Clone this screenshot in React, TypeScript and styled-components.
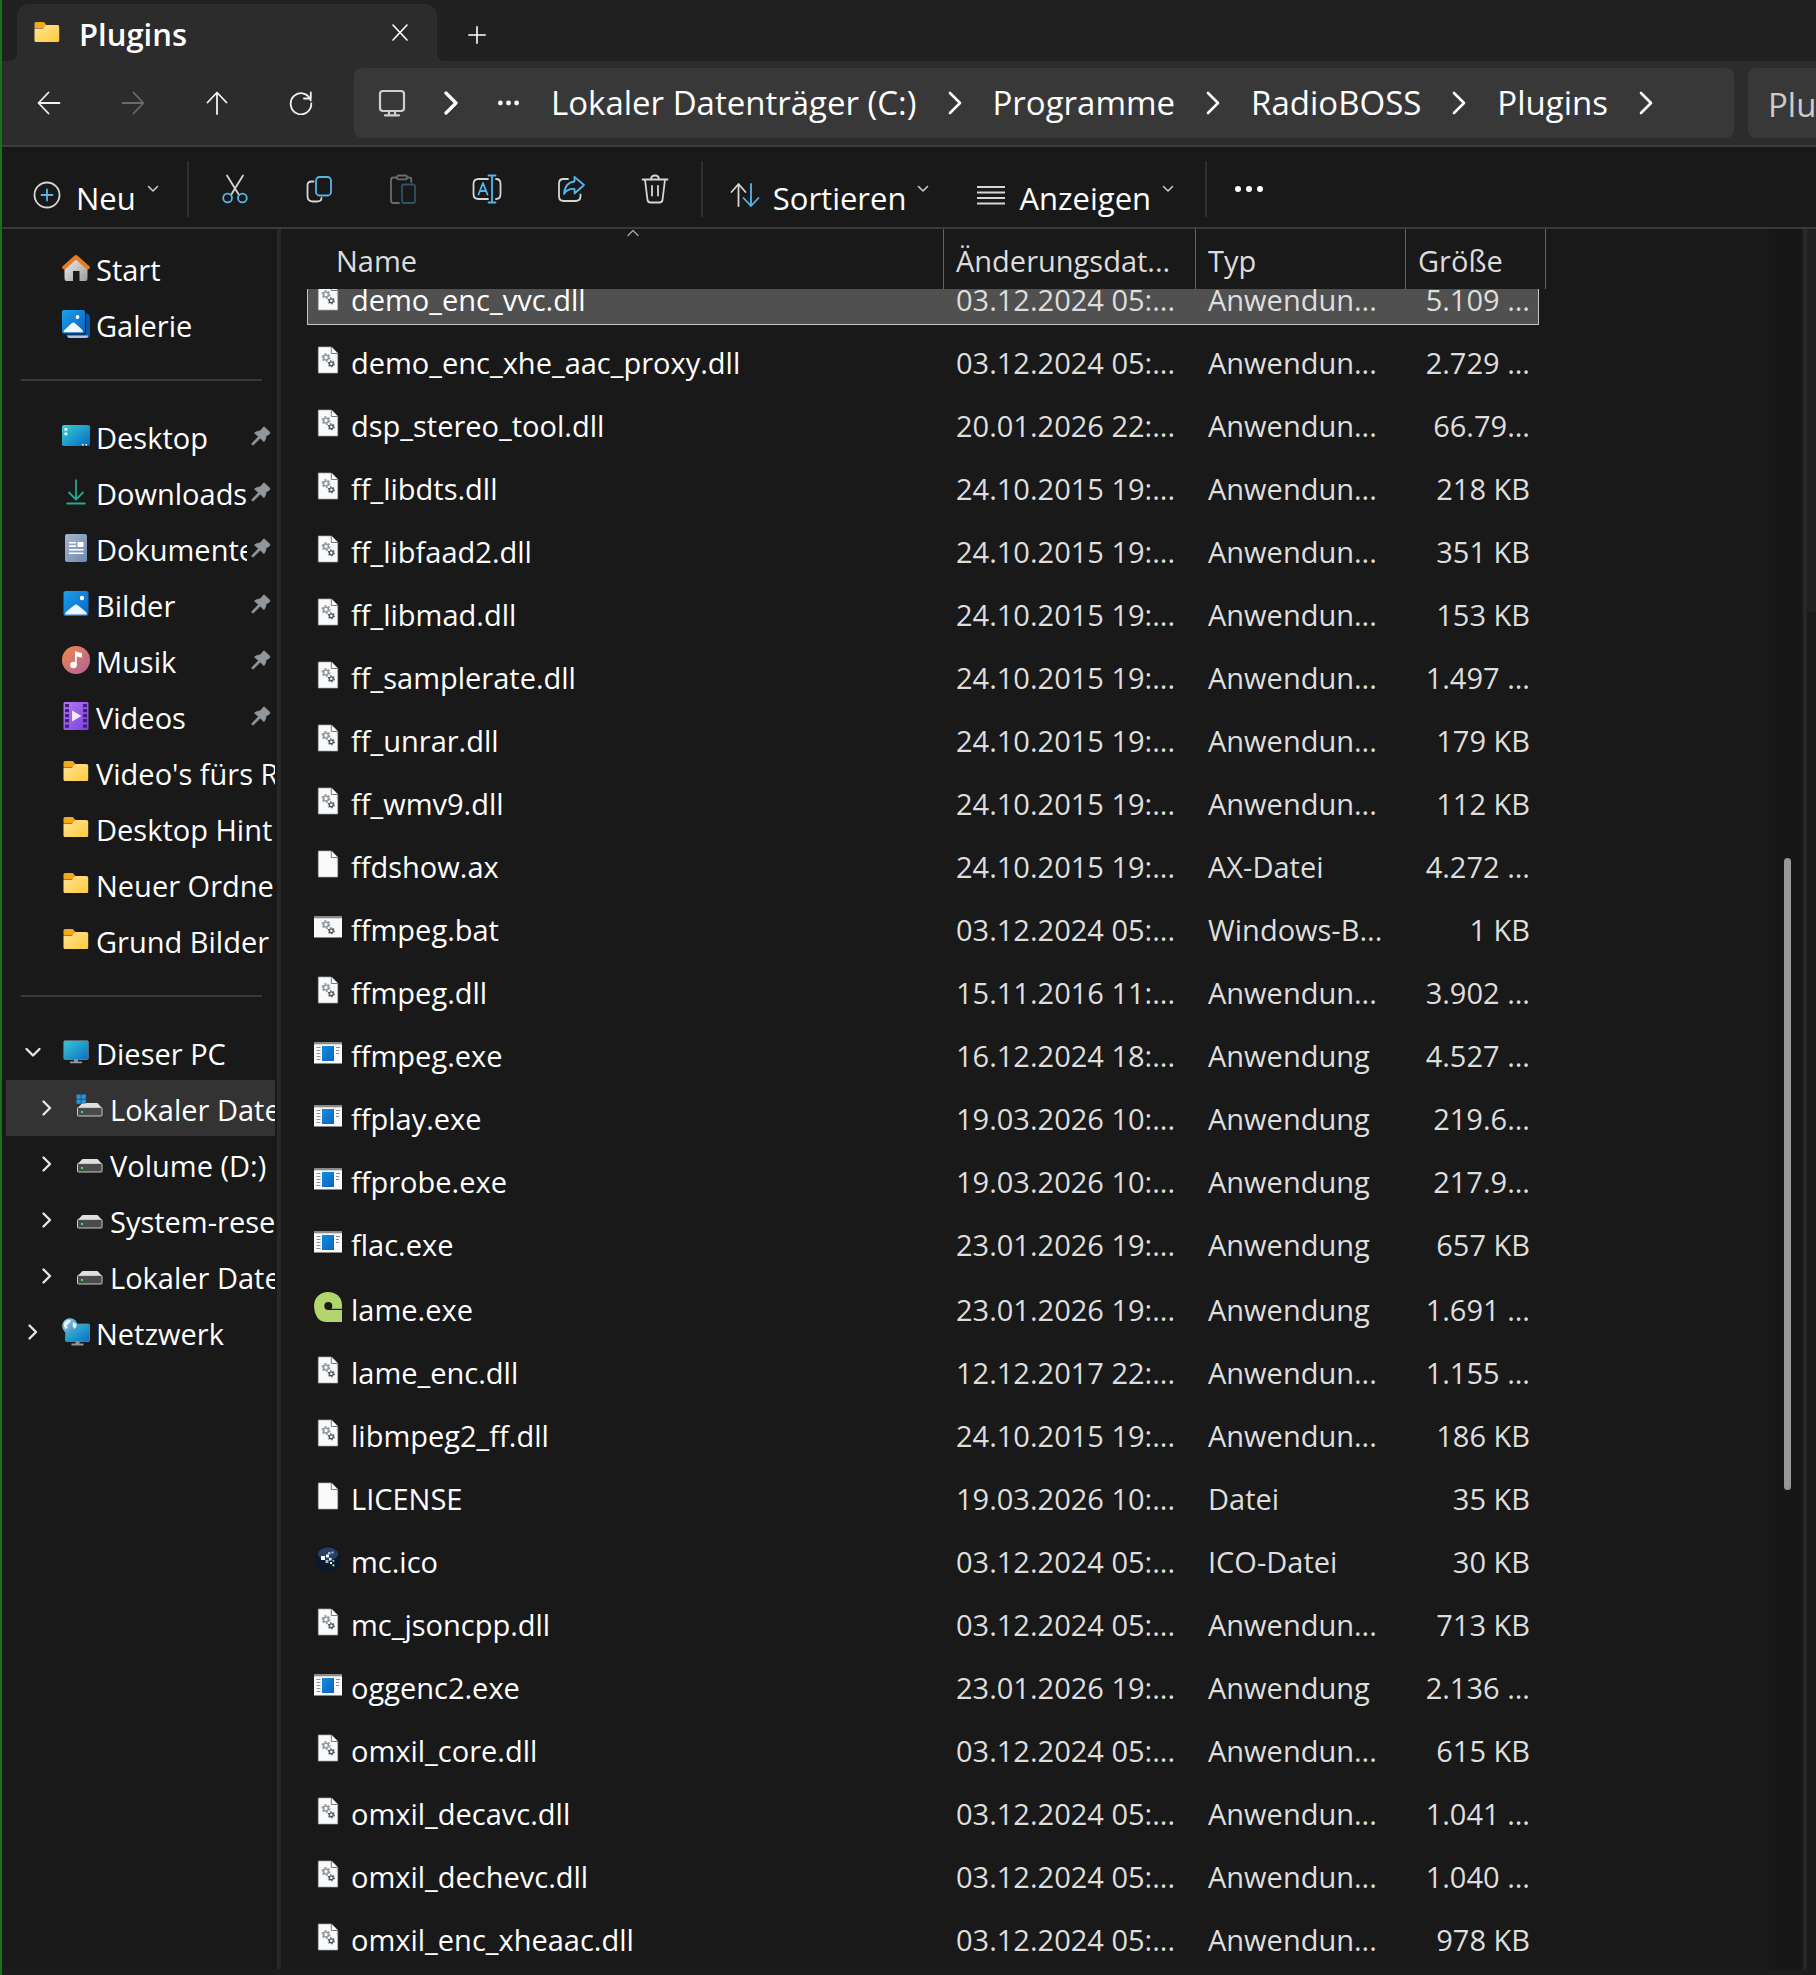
import React, { useLayoutEffect, useRef } from "react";
import styled, { createGlobalStyle, css } from "styled-components";

const GlobalStyle = createGlobalStyle`
  * { box-sizing: border-box; }
  body { margin: 0; background: #191919; }
  button, input, a { font: inherit; color: inherit; }
  svg { display: block; flex: none; }
`;

const Window = styled.div`
  height: 100vh;
  display: flex;
  flex-direction: column;
  overflow: hidden;
  border-left: 2px solid #14741a;
  background: #191919;
  color: #fff;
  font-family: "Open Sans", "Noto Sans", sans-serif;
  font-size: 29px;
`;

/* ---------- tab strip ---------- */

const TabStrip = styled.div`
  flex: none;
  display: flex;
  align-items: flex-end;
  height: 61px;
  padding-left: 15px;
  background: #202020;
`;

const Tab = styled.div`
  position: relative;
  display: flex;
  align-items: center;
  width: 420px;
  height: 57px;
  padding: 0 25px 0 16px;
  border-radius: 12px 12px 0 0;
  background: #2c2c2c;

  &::before,
  &::after {
    content: "";
    position: absolute;
    bottom: 0;
    width: 8px;
    height: 8px;
  }
  &::before {
    right: 100%;
    background: radial-gradient(circle at 0 0, transparent 8px, #2c2c2c 8px);
  }
  &::after {
    left: 100%;
    background: radial-gradient(circle at 100% 0, transparent 8px, #2c2c2c 8px);
  }
`;

const TabTitle = styled.span`
  flex: 1;
  margin-left: 18px;
  padding-top: 2px;
  font-size: 31px;
  font-weight: 600;
  line-height: 44px;
`;

const PlainButton = styled.button`
  display: flex;
  align-items: center;
  justify-content: center;
  margin: 0;
  padding: 0;
  border: 0;
  background: none;
  cursor: pointer;
`;

const TabAction = styled(PlainButton)`
  width: 24px;
  height: 24px;
`;

const NewTab = styled(PlainButton)`
  width: 80px;
  height: 53px;
`;

/* ---------- navigation bar ---------- */

const NavBar = styled.div`
  flex: none;
  display: flex;
  align-items: center;
  height: 86px;
  padding-left: 5px;
  background: #2c2c2c;
  border-bottom: 2px solid #3c3c3c;
`;

const NavButton = styled(PlainButton)`
  width: 84px;
  height: 70px;
  color: #f2f2f2;
  &:disabled {
    color: #6a6a6a;
  }
`;

const AddressBar = styled.nav`
  flex: 1;
  display: flex;
  align-items: center;
  height: 70px;
  margin-left: 11px;
  padding-left: 24px;
  border-radius: 8px;
  background: #383838;
`;

const CrumbLink = styled(PlainButton)`
  font-size: 33px;
  line-height: 44px;
`;

const CrumbArrow = styled.span<{ $lead?: number; $trail?: number }>`
  margin-left: ${(p) => p.$lead ?? 30}px;
  margin-right: ${(p) => p.$trail ?? 30}px;
`;

const CrumbMore = styled(PlainButton)`
  margin: 0 32px 0 39px;
`;

const SearchBox = styled.div`
  flex: none;
  width: 68px;
  height: 70px;
  margin-left: 14px;
  overflow: hidden;
`;

const SearchInput = styled.input`
  width: 280px;
  height: 70px;
  padding: 2px 20px 0;
  border: 0;
  border-radius: 8px;
  outline: 0;
  background: #383838;
  font-size: 33px;
  &::placeholder {
    color: #cbcbcb;
    opacity: 1;
  }
`;

/* ---------- command bar ---------- */

const CommandBar = styled.div`
  flex: none;
  display: flex;
  align-items: center;
  height: 82px;
  padding: 4px 0 0 31px;
  border-bottom: 2px solid #3a3a3a;
`;

const LabelCommand = styled(PlainButton)`
  align-items: center;
`;

const CommandIcon = styled.span`
  padding-top: 12px;
`;

const CommandLabel = styled.span<{ $gap: number }>`
  margin: 0 11px 0 ${(p) => p.$gap}px;
  padding-top: 18px;
  font-size: 31px;
  font-weight: 500;
  line-height: 40px;
`;

const IconCommand = styled(PlainButton)`
  width: 84px;
  height: 56px;
`;

const CommandDivider = styled.span<{ $before: number; $after: number }>`
  width: 2px;
  height: 56px;
  margin: 0 ${(p) => p.$after}px 0 ${(p) => p.$before}px;
  background: #2e2e2e;
`;

const CommandGap = styled.span`
  width: 47px;
`;

/* ---------- body ---------- */

const Body = styled.div`
  flex: 1;
  min-height: 0;
  display: flex;
`;

const Footer = styled.div`
  flex: none;
  height: 6px;
  background: #1c1c1c;
`;

const Sidebar = styled.nav`
  flex: none;
  width: 273px;
  padding: 11px 0 0 4px;
  overflow: hidden;
`;

const PaneEdge = styled.div`
  flex: none;
  width: 4px;
  margin-left: 2px;
  background: #282828;
`;

const SideItem = styled.a<{ $selected?: boolean; $nested?: boolean; $tree?: boolean }>`
  display: flex;
  align-items: center;
  height: 56px;
  padding-left: ${(p) => (p.$nested ? 31 : p.$tree ? 17 : 56)}px;
  background: ${(p) => (p.$selected ? "#333" : "transparent")};
  text-decoration: none;
`;

const Twisty = styled.span`
  width: 39px;
  padding-left: 1px;
`;

const SideLabel = styled.span`
  flex: 1;
  min-width: 0;
  margin-left: 6px;
  padding-top: 3px;
  overflow: hidden;
  white-space: nowrap;
  line-height: 44px;
`;

const PinSlot = styled.span`
  padding: 0 4px;
`;

const SideRule = styled.hr`
  height: 2px;
  margin: 27px 13px 27px 15px;
  border: 0;
  background: #3a3a3a;
`;

const FilePane = styled.main`
  flex: 1;
  min-width: 0;
  padding-left: 26px;
  overflow: auto;
  scrollbar-width: none;
`;

const FileTable = styled.table`
  table-layout: fixed;
  width: 1239px;
  margin-bottom: 63px;
  border-collapse: separate;
  border-spacing: 0;
`;

const HeadCell = styled.th<{ $line?: boolean }>`
  position: sticky;
  top: 0;
  z-index: 1;
  height: 60px;
  padding: 4px 0 0 12px;
  background: #191919;
  border-right: ${(p) => (p.$line ? "1px solid #636363" : "0")};
  color: #dcdcdc;
  font-weight: 400;
  line-height: 40px;
  text-align: left;
  white-space: nowrap;
`;

const NameHead = styled.div`
  position: relative;
  padding-left: 17px;
`;

const SortMark = styled.span`
  position: absolute;
  top: -12px;
  left: calc(50% - 4px);
`;

const FileRow = styled.tr<{ $tall?: boolean; $selected?: boolean }>`
  height: ${(p) => (p.$tall ? 65 : 63)}px;
  ${(p) =>
    p.$selected &&
    css`
      td:not(:last-child) {
        background: #505050;
        box-shadow: inset 0 -1px #c4c4c4;
      }
      td:first-child {
        box-shadow: inset 1px -1px #c4c4c4;
      }
      td:nth-child(4) {
        box-shadow: inset -1px -1px #c4c4c4;
      }
    `}
`;

const Cell = styled.td<{ $right?: boolean }>`
  padding: 0 ${(p) => (p.$right ? 9 : 0)}px 0 12px;
  vertical-align: bottom;
  color: #dedede;
  line-height: 50px;
  text-align: ${(p) => (p.$right ? "right" : "left")};
  white-space: nowrap;
`;

const NameCell = styled(Cell)`
  padding-left: 7px;
  color: #fff;
`;

const FileName = styled.div`
  display: flex;
  align-items: center;
  gap: 9px;
`;

const FileIconBox = styled.span`
  margin-bottom: 7px;
`;

const ScrollTrack = styled.div`
  flex: none;
  display: flex;
  flex-direction: column;
  align-items: center;
  width: 32px;
  padding-left: 5px;
  background: #171717;
`;

const TrackSpace = styled.div<{ $share: number }>`
  flex: ${(p) => p.$share};
`;

const ScrollThumb = styled.div<{ $share: number }>`
  flex: ${(p) => p.$share};
  width: 7px;
  border-radius: 4px;
  background: #989898;
`;

const PreviewPane = styled.aside`
  flex: none;
  display: flex;
  flex-direction: column;
  width: 9px;
  &::before {
    content: "";
    height: 22%;
    background: #202020;
  }
`;

/* ---------- line icons ---------- */

const line = {
  fill: "none",
  stroke: "currentColor",
  strokeWidth: 1.8,
  strokeLinecap: "round" as const,
  strokeLinejoin: "round" as const,
};
const BLUE = "#56b6ea";
const PALE = "#d6d6d6";

const Chevron = ({ w, h, d, sw = 2, color = "#fff" }: { w: number; h: number; d: string; sw?: number; color?: string }) => (
  <svg width={w} height={h} viewBox={`0 0 ${w} ${h}`} aria-hidden="true">
    <path {...line} stroke={color} strokeWidth={sw} d={d} />
  </svg>
);
const CrumbChevron = ({ sw = 2.6 }: { sw?: number }) => <Chevron w={16} h={24} sw={sw} d="M3 2 L13 12 L3 22" />;
const DropChevron = () => (
  <Chevron w={12} h={8} sw={1.6} color="#c9c9c9" d="M1.5 1.5 L6 6 L10.5 1.5" />
);
const TreeChevron = ({ open }: { open?: boolean }) => (
  <Chevron w={18} h={18} sw={2.4} color="#e4e4e4" d={open ? "M2.5 6 L9 12.5 L15.5 6" : "M5.5 2.5 L12 9 L5.5 15.5"} />
);

const Dots = ({ w, r }: { w: number; r: number }) => (
  <svg width={w} height={8} viewBox={`0 0 ${w} 8`} aria-hidden="true">
    {[r, w / 2, w - r].map((x) => (
      <circle key={x} cx={x} cy="4" r={r} fill="#fff" />
    ))}
  </svg>
);

const BackIcon = () => (
  <svg width="24" height="24" viewBox="0 0 24 24">
    <path {...line} d="M22.5 12 H2 M11.5 1.5 L1.5 12 L11.5 22.5" />
  </svg>
);
const ForwardIcon = () => (
  <svg width="24" height="24" viewBox="0 0 24 24">
    <path {...line} d="M1.5 12 H22 M12.5 1.5 L22.5 12 L12.5 22.5" />
  </svg>
);
const UpIcon = () => (
  <svg width="24" height="24" viewBox="0 0 24 24">
    <path {...line} d="M12 23 V2 M2.5 11.5 L12 1.5 L21.5 11.5" />
  </svg>
);
const RefreshIcon = () => (
  <svg width="24" height="24" viewBox="0 0 24 24">
    <path {...line} d="M21.8 9.5 A10.3 10.6 0 1 0 22.3 12.5 M21.8 1.5 V7.5 H15" />
  </svg>
);
const CloseIcon = () => (
  <svg width="18" height="18" viewBox="0 0 18 18">
    <path {...line} strokeWidth="1.6" d="M2 1 L16 16 M16 1 L2 16" />
  </svg>
);
const PlusIcon = () => (
  <svg width="18" height="18" viewBox="0 0 18 18">
    <path {...line} strokeWidth="1.6" d="M9 .8 V17.2 M.8 9 H17.2" />
  </svg>
);
const MonitorIcon = () => (
  <svg width="28" height="28" viewBox="0 0 28 28">
    <path {...line} stroke="#cfcfcf" strokeWidth="2.2" d="M5 2 H23 Q26 2 26 5 V19 Q26 22 23 22 H5 Q2 22 2 19 V5 Q2 2 5 2 Z M11 22 V26 M17 22 V26 M7 26.4 H21" />
  </svg>
);

const NewIcon = () => (
  <svg width="28" height="28" viewBox="0 0 28 28">
    <circle {...line} stroke={PALE} cx="14" cy="14" r="12.5" />
    <path {...line} stroke={BLUE} d="M14 8.5 V19.5 M8.5 14 H19.5" />
  </svg>
);
const CutIcon = () => (
  <svg width="30" height="30" viewBox="0 0 30 30">
    <path {...line} stroke={PALE} d="M7 1.5 L19 21 M23 1.5 L11 21" />
    <circle {...line} stroke={BLUE} cx="7.6" cy="24" r="4.4" />
    <circle {...line} stroke={BLUE} cx="22.4" cy="24" r="4.4" />
  </svg>
);
const CopyIcon = () => (
  <svg width="30" height="30" viewBox="0 0 30 30">
    <path {...line} stroke={PALE} d="M9.5 7.5 H7.5 Q3.5 7.5 3.5 11.5 V22 Q3.5 27.5 9 27.5 H13 Q17.5 27.5 17.5 24" />
    <rect {...line} stroke={BLUE} x="12" y="3" width="15" height="18.5" rx="3.5" />
  </svg>
);
const PasteIcon = () => (
  <svg width="30" height="30" viewBox="0 0 30 30">
    <path {...line} stroke="#6b6b6b" d="M9 3.5 H5.5 Q3 3.5 3 6 V26.5 Q3 29 5.5 29 H11 M19 3.5 H21 Q23.3 3.5 23.3 6 V8 M10.5 1.5 H17.5 Q19 1.5 19 3.4 Q19 5.4 17.5 5.4 H10.5 Q9 5.4 9 3.4 Q9 1.5 10.5 1.5 Z" />
    <rect {...line} stroke="#2f5266" x="14" y="10.5" width="13" height="18.5" rx="2" />
  </svg>
);
const RenameIcon = () => (
  <svg width="30" height="30" viewBox="0 0 30 30">
    <path {...line} stroke={PALE} d="M16 5 H6.5 Q1.5 5 1.5 10 V20 Q1.5 25 6.5 25 H16 M24 5 Q28.5 5 28.5 10 V20 Q28.5 25 24 25" />
    <path {...line} stroke={BLUE} d="M6.5 20.5 L11 9 L15.5 20.5 M8 17 H14 M20 1.5 V28.5 M16.5 1.5 H23.5 M16.5 28.5 H23.5" />
  </svg>
);
const ShareIcon = () => (
  <svg width="30" height="30" viewBox="0 0 30 30">
    <path {...line} stroke={PALE} d="M12 5 H7.500 Q3 5 3 9.500 V22 Q3 27 7.500 27 H19.500 Q24.500 27 24.500 22 V20.500" />
    <path {...line} stroke={BLUE} d="M18.500 3 L28 11 L18.500 19.500 V15 Q11.500 14.500 8 20 Q9 8.500 18.500 7.500 Z" />
  </svg>
);
const TrashIcon = () => (
  <svg width="30" height="30" viewBox="0 0 30 30">
    <path {...line} stroke={PALE} d="M2.500 5.500 H27.500 M11 5.500 Q11 1.500 15 1.500 Q19 1.500 19 5.500 M5 5.500 L7.500 26 Q8 28.500 10.500 28.500 H19.500 Q22 28.500 22.500 26 L25 5.500 M12 12 V21.500 M18 12 V21.500" />
  </svg>
);
const SortIcon = () => (
  <svg width="30" height="26" viewBox="0 0 30 26">
    <path {...line} stroke={PALE} d="M8.500 24 V2.500 M1.500 10 L8.500 2 L15.500 10" />
    <path {...line} stroke={BLUE} d="M21 2 V24 M13.500 16 L21 24 L28.500 16" />
  </svg>
);
const ViewIcon = () => (
  <svg width="30" height="22" viewBox="0 0 30 22">
    <path {...line} strokeLinecap="butt" stroke={PALE} d="M1 3 H29 M1 8.500 H29 M1 14 H29 M1 19.500 H29" />
  </svg>
);

/* ---------- coloured icons ---------- */

const Grad = ({ id, from, to }: { id: string; from: string; to: string }) => (
  <linearGradient id={id} x1="0" y1="0" x2="1" y2="1">
    <stop offset="0" stopColor={from} />
    <stop offset="1" stopColor={to} />
  </linearGradient>
);

const Icon28 = ({ children }: { children: React.ReactNode }) => (
  <svg width="28" height="28" viewBox="0 0 28 28" aria-hidden="true">
    {children}
  </svg>
);

const FolderIcon = () => (
  <Icon28>
    <defs><Grad id="folder" from="#ffe596" to="#ffca3c" /></defs>
    <path fill="#f3a71b" d="M1.500 4.500 Q1.500 3 3 3 H10 Q11 3 11.800 4 L13 5.500 V9 H1.500 Z" />
    <path fill="url(#folder)" d="M1.500 9.500 H9.500 Q10.500 9.500 11.300 8.500 L13 6 H24.500 Q26.200 6 26.200 7.500 V21.500 Q26.200 23 24.700 23 H3 Q1.500 23 1.500 21.500 Z" />
  </Icon28>
);
const HomeIcon = () => (
  <Icon28>
    <defs><Grad id="wall" from="#f0f0f0" to="#9d9d9d" /></defs>
    <path fill="url(#wall)" d="M2.500 13 L14 3 L25.500 13 V24.500 Q25.500 27 23.500 27 H17.500 V17 H11 V27 H4.500 Q2.500 27 2.500 24.500 Z" />
    <path fill="none" stroke="#e87b22" strokeWidth="4" strokeLinecap="round" strokeLinejoin="round" d="M2.200 13.500 L14 3 L25.800 13.500" />
  </Icon28>
);
const GalleryIcon = () => (
  <Icon28>
    <defs><Grad id="sky" from="#1ba0e9" to="#0b62c4" /></defs>
    <path fill="#0a57a8" d="M24 3 Q28 4 28 8 V25 Q28 28 25 28 H8 Q5 28 4 24.500 H22 Q24 24.500 24 22 Z" />
    <path fill="#a9c6e6" d="M5 25.500 H26.500 Q26 28 24 28 H8 Q5.500 28 5 25.500 Z" />
    <rect width="23" height="23.500" rx="2" fill="url(#sky)" />
    <circle cx="15.500" cy="7" r="1.900" fill="#fff" />
    <path fill="#eef7ff" d="M1.500 22.300 Q1.500 20.800 3 19.500 L10 13 Q11.300 12 12.700 13 L19.500 19 Q21.300 21 21 22.300 Z" />
  </Icon28>
);
const PicturesIcon = () => (
  <Icon28>
    <defs><Grad id="sky2" from="#1ba0e9" to="#0b62c4" /></defs>
    <rect x="1.500" y="1" width="25" height="25" rx="2.500" fill="url(#sky2)" />
    <circle cx="20" cy="8" r="2.200" fill="#fff" />
    <path fill="#eef7ff" d="M3 24.500 Q3 23 4.500 21.500 L12.500 15 Q14 13.800 15.500 15 L23.500 21.500 Q25 23 25 24.500 Z" />
  </Icon28>
);
const DesktopIcon = () => (
  <Icon28>
    <defs><Grad id="desk" from="#34cfd6" to="#0868c0" /></defs>
    <rect y="3" width="28" height="21" rx="1.800" fill="url(#desk)" />
    <path fill="#e9fbff" d="M2.500 6 h2.800 v2.800 h-2.800z M2.500 10.500 h2.800 v2.800 h-2.800z M20 22 h1.500 v1.500 h-1.500z M23.500 22 h1.500 v1.500 h-1.500z" />
  </Icon28>
);
const DownloadIcon = () => (
  <Icon28>
    <path fill="none" stroke="#2ba58b" strokeWidth="1.800" strokeLinejoin="round" d="M14 1.500 V21 M6.500 14 L14 21.500 L21.500 14 M4.500 25.500 H23.500" />
  </Icon28>
);
const DocumentsIcon = () => (
  <Icon28>
    <defs><Grad id="docs" from="#a5b7cf" to="#6f88ab" /></defs>
    <rect x="3" width="22" height="28" rx="2" fill="url(#docs)" />
    <path fill="#fff" d="M7 8 h7 v1.600 h-7z M7 11.300 h7 v1.600 h-7z M15.500 8 h6 v5 h-6z M7 15 h14.500 v1.600 h-14.500z M7 18.500 h14.500 v1.600 h-14.500z" />
  </Icon28>
);
const MusicIcon = () => (
  <Icon28>
    <defs><Grad id="music" from="#f08a4b" to="#b0609f" /></defs>
    <circle cx="14" cy="14" r="14" fill="url(#music)" />
    <circle cx="11.500" cy="19" r="3.300" fill="#fff" />
    <path fill="#fff" d="M13 5.500 Q13.500 5 14.300 5.500 Q17 6.500 20 7 V11.500 Q17 11.500 14.800 10.300 V19 H13 Z" />
  </Icon28>
);
const VideoIcon = () => (
  <Icon28>
    <defs><Grad id="video" from="#b27af0" to="#7d3fe0" /></defs>
    <rect x="1.500" width="25" height="28" rx="1.500" fill="url(#video)" />
    {[2, 7, 12, 17, 22.5].map((y) => (
      <path key={y} fill="#402273" d={`M3 ${y} h4 v3.3 h-4z M21 ${y} h4 v3.3 h-4z`} />
    ))}
    <path fill="#f2eaff" d="M10 8.500 L19.500 14 L10 19.500 Z" />
  </Icon28>
);
const ComputerIcon = () => (
  <Icon28>
    <defs><Grad id="pc" from="#35cbd9" to="#0b6cc4" /></defs>
    <rect x="1.800" y="2.800" width="24.500" height="18.700" rx="1" fill="url(#pc)" stroke="#7b8790" strokeWidth=".8" />
    <path fill="#8d969c" d="M12 21.500 h4 v2 h4 v1.800 h-12 v-1.800 h4z" />
  </Icon28>
);
const NetworkIcon = () => (
  <Icon28>
    <defs>
      <Grad id="net" from="#35cbd9" to="#0b6cc4" />
      <Grad id="globe" from="#9bd3ec" to="#2c86bd" />
    </defs>
    <rect x="3.500" y="6" width="24" height="17.500" rx="1" fill="url(#net)" stroke="#7b8790" strokeWidth=".8" />
    <path fill="#8d969c" d="M13.500 23.500 h4 v2 h4 v2 h-12 v-2 h4z" />
    <circle cx="8" cy="8" r="7.800" fill="url(#globe)" />
    <path fill="#e4f4fb" d="M2 5 Q5 1 9 2 L7.500 5 L4.500 7.500 L6 10 L3.500 11 Q1 8 2 5 Z M11 4 L14.500 6 Q15 9 12.500 11 L10.500 8 Z" />
  </Icon28>
);
const DriveIcon = ({ system }: { system?: boolean }) => (
  <Icon28>
    <path fill="#dfdfdf" d="M6.500 9 H21.500 L26 14 H1.500 Z" />
    <rect x="1.500" y="13.500" width="24.500" height="8.500" rx=".8" fill="#4b4b4b" stroke="#c9c9c9" strokeWidth="1" />
    <rect x="5" y="17" width="2" height="2" fill="#4de04d" />
    {system && <path fill="#2a96e0" d="M.5 .5 h4.300 v4.300 h-4.300z M5.500 .5 h4.300 v4.300 h-4.300z M.5 5.500 h4.300 v4.300 h-4.300z M5.500 5.500 h4.300 v4.300 h-4.300z" />}
  </Icon28>
);
const PinIcon = () => (
  <svg width="20" height="20" viewBox="0 0 20 20" aria-hidden="true">
    <path fill="#8f989f" stroke="#8f989f" strokeWidth=".8" strokeLinejoin="round" d="M12 1.500 Q13 .5 14 1.500 L18.500 6 Q19.500 7.500 18 8.300 L15 10 Q14.700 14 13 15.800 L9.300 12.100 L2.800 18.500 Q1.500 19.200 1 18.700 Q.6 18 1.400 17 L7.500 10.800 L3.500 7 Q6 5 9.600 4.800 Z" />
  </svg>
);

const Gear = ({ x, y, r, color }: { x: number; y: number; r: number; color: string }) => (
  <g fill="none" stroke={color}>
    <circle cx={x} cy={y} r={r * 0.62} strokeWidth={r * 0.42} />
    <circle cx={x} cy={y} r={r * 0.95} strokeWidth={r * 0.35} strokeDasharray={`${r * 0.46} ${r * 0.535}`} />
  </g>
);
const Gears = () => (
  <>
    <Gear x={12} y={11.5} r={4} color="#8d99a2" />
    <Gear x={17.3} y={17.8} r={3.2} color="#49535b" />
  </>
);
const Sheet = () => (
  <>
    <path fill="#fafafa" stroke="#a8a8a8" strokeWidth=".7" d="M4.300 1 H17.500 L23.700 7.300 V27 H4.300 Z" />
    <path fill="#fff" stroke="#777" strokeWidth="1" d="M17.300 1 V7.500 H23.700" />
  </>
);
const Frame = () => (
  <>
    <rect x="0" y="3.500" width="28" height="21" fill="#fafafa" />
    <path fill="#8b8b8b" d="M0 3.500 h28 v1.800 h-28z" />
  </>
);

type Kind = "dll" | "file" | "bat" | "exe" | "lame" | "ico";

const FileIcon = ({ kind }: { kind: Kind }) => {
  switch (kind) {
    case "dll":
      return <Icon28><Sheet /><Gears /></Icon28>;
    case "file":
      return <Icon28><Sheet /></Icon28>;
    case "bat":
      return <Icon28><Frame /><Gears /></Icon28>;
    case "exe":
      return (
        <Icon28>
          <defs><Grad id="app" from="#118fe0" to="#0d62bd" /></defs>
          <Frame />
          <rect x="8" y="7" width="12" height="15" fill="url(#app)" />
          <path stroke="#8a8f94" strokeWidth="1" d="M2.500 8.500 h4 M2.500 11.500 h4 M2.500 14.500 h4 M2.500 17.500 h4 M2.500 20.500 h4 M22 8.500 h4 M22 11.500 h3 M22 14.500 h3" />
        </Icon28>
      );
    case "lame":
      return (
        <svg width="28" height="30" viewBox="0 0 28 30" aria-hidden="true">
          <path fill="#b3d56d" d="M0 13 Q.5 7 4.500 3.500 Q8 0 14 0 Q20 0 24 3.500 Q28 7.500 28 13 V30 H12 Q5.500 29.500 3 25 Q0 20 0 13 Z" />
          <circle cx="14.300" cy="14" r="4" fill="#191919" />
          <path stroke="#191919" strokeWidth="1.200" d="M14 17.400 H28" />
        </svg>
      );
    case "ico":
      return (
        <Icon28>
          <circle cx="14" cy="14" r="13.500" fill="#0d1828" />
          <ellipse cx="14" cy="9" rx="10" ry="6.500" fill="#2b3f63" />
          <path fill="#f2fbff" d="M7 11 h4 v4 h-4z M12 9.500 h3 v3 h-3z M15 13 h2.500 v2.500 h-2.500z" />
          <path fill="#8fc0e6" d="M11.500 15 h3 v3 h-3z M14 7 h2.500 v2.500 h-2.500z M17.500 6.500 h2 v2 h-2z M18.500 15 h1.800 v1.800 h-1.800z" />
          <path fill="#e7f3b0" d="M16 17 h2 v2 h-2z M18.500 19.500 h1.800 v1.800 h-1.800z" />
        </Icon28>
      );
  }
};

/* ---------- data ---------- */

const DLL = "Anwendun...";
const EXE = "Anwendung";

const files: [string, string, string, string, Kind][] = [
  ["demo_enc_vvc.dll", "03.12.2024 05:...", DLL, "5.109 ...", "dll"],
  ["demo_enc_xhe_aac_proxy.dll", "03.12.2024 05:...", DLL, "2.729 ...", "dll"],
  ["dsp_stereo_tool.dll", "20.01.2026 22:...", DLL, "66.79...", "dll"],
  ["ff_libdts.dll", "24.10.2015 19:...", DLL, "218 KB", "dll"],
  ["ff_libfaad2.dll", "24.10.2015 19:...", DLL, "351 KB", "dll"],
  ["ff_libmad.dll", "24.10.2015 19:...", DLL, "153 KB", "dll"],
  ["ff_samplerate.dll", "24.10.2015 19:...", DLL, "1.497 ...", "dll"],
  ["ff_unrar.dll", "24.10.2015 19:...", DLL, "179 KB", "dll"],
  ["ff_wmv9.dll", "24.10.2015 19:...", DLL, "112 KB", "dll"],
  ["ffdshow.ax", "24.10.2015 19:...", "AX-Datei", "4.272 ...", "file"],
  ["ffmpeg.bat", "03.12.2024 05:...", "Windows-B...", "1 KB", "bat"],
  ["ffmpeg.dll", "15.11.2016 11:...", DLL, "3.902 ...", "dll"],
  ["ffmpeg.exe", "16.12.2024 18:...", EXE, "4.527 ...", "exe"],
  ["ffplay.exe", "19.03.2026 10:...", EXE, "219.6...", "exe"],
  ["ffprobe.exe", "19.03.2026 10:...", EXE, "217.9...", "exe"],
  ["flac.exe", "23.01.2026 19:...", EXE, "657 KB", "exe"],
  ["lame.exe", "23.01.2026 19:...", EXE, "1.691 ...", "lame"],
  ["lame_enc.dll", "12.12.2017 22:...", DLL, "1.155 ...", "dll"],
  ["libmpeg2_ff.dll", "24.10.2015 19:...", DLL, "186 KB", "dll"],
  ["LICENSE", "19.03.2026 10:...", "Datei", "35 KB", "file"],
  ["mc.ico", "03.12.2024 05:...", "ICO-Datei", "30 KB", "ico"],
  ["mc_jsoncpp.dll", "03.12.2024 05:...", DLL, "713 KB", "dll"],
  ["oggenc2.exe", "23.01.2026 19:...", EXE, "2.136 ...", "exe"],
  ["omxil_core.dll", "03.12.2024 05:...", DLL, "615 KB", "dll"],
  ["omxil_decavc.dll", "03.12.2024 05:...", DLL, "1.041 ...", "dll"],
  ["omxil_dechevc.dll", "03.12.2024 05:...", DLL, "1.040 ...", "dll"],
  ["omxil_enc_xheaac.dll", "03.12.2024 05:...", DLL, "978 KB", "dll"],
];

const pinned: [string, React.ReactNode][] = [
  ["Desktop", <DesktopIcon />],
  ["Downloads", <DownloadIcon />],
  ["Dokumente", <DocumentsIcon />],
  ["Bilder", <PicturesIcon />],
  ["Musik", <MusicIcon />],
  ["Videos", <VideoIcon />],
];
const folders = ["Video's fürs R", "Desktop Hint", "Neuer Ordne", "Grund Bilder"];
const drives = ["Lokaler Date", "Volume (D:)", "System-rese", "Lokaler Date"];
const crumbs = ["Lokaler Datenträger (C:)", "Programme", "RadioBOSS", "Plugins"];

const NameCol = styled.col`
  width: 637px;
`;
const DateCol = styled.col`
  width: 252px;
`;
const TypeCol = styled.col`
  width: 210px;
`;
const SizeCol = styled.col`
  width: 133px;
`;
const EndCol = styled.col`
  width: 7px;
`;

/* How far the list is scrolled below its sticky header. */
const LIST_SCROLL = 27;

export default function App() {
  const pane = useRef<HTMLElement>(null);
  useLayoutEffect(() => {
    if (pane.current) pane.current.scrollTop = LIST_SCROLL;
  }, []);

  return (
    <Window>
      <GlobalStyle />
      <TabStrip>
        <Tab>
          <FolderIcon />
          <TabTitle>Plugins</TabTitle>
          <TabAction aria-label="Tab schließen"><CloseIcon /></TabAction>
        </Tab>
        <NewTab aria-label="Neuer Tab"><PlusIcon /></NewTab>
      </TabStrip>

      <NavBar>
        <NavButton aria-label="Zurück"><BackIcon /></NavButton>
        <NavButton aria-label="Vorwärts" disabled><ForwardIcon /></NavButton>
        <NavButton aria-label="Nach oben"><UpIcon /></NavButton>
        <NavButton aria-label="Aktualisieren"><RefreshIcon /></NavButton>
        <AddressBar aria-label="Pfad">
          <MonitorIcon />
          <CrumbArrow $lead={37} $trail={0}><CrumbChevron sw={3.2} /></CrumbArrow>
          <CrumbMore aria-label="Weitere Ordner"><Dots w={21} r={2.4} /></CrumbMore>
          {crumbs.map((name) => (
            <React.Fragment key={name}>
              <CrumbLink>{name}</CrumbLink>
              <CrumbArrow><CrumbChevron /></CrumbArrow>
            </React.Fragment>
          ))}
        </AddressBar>
        <SearchBox>
          <SearchInput type="search" aria-label="Suche" placeholder="Plu" />
        </SearchBox>
      </NavBar>

      <CommandBar>
        <LabelCommand>
          <CommandIcon><NewIcon /></CommandIcon>
          <CommandLabel $gap={15}>Neu</CommandLabel>
          <DropChevron />
        </LabelCommand>
        <CommandDivider $before={28} $after={4} />
        <IconCommand aria-label="Ausschneiden"><CutIcon /></IconCommand>
        <IconCommand aria-label="Kopieren"><CopyIcon /></IconCommand>
        <IconCommand aria-label="Einfügen" disabled><PasteIcon /></IconCommand>
        <IconCommand aria-label="Umbenennen"><RenameIcon /></IconCommand>
        <IconCommand aria-label="Teilen"><ShareIcon /></IconCommand>
        <IconCommand aria-label="Löschen"><TrashIcon /></IconCommand>
        <CommandDivider $before={4} $after={27} />
        <LabelCommand>
          <CommandIcon><SortIcon /></CommandIcon>
          <CommandLabel $gap={13}>Sortieren</CommandLabel>
          <DropChevron />
        </LabelCommand>
        <CommandGap />
        <LabelCommand>
          <CommandIcon><ViewIcon /></CommandIcon>
          <CommandLabel $gap={13}>Anzeigen</CommandLabel>
          <DropChevron />
        </LabelCommand>
        <CommandDivider $before={31} $after={28} />
        <PlainButton aria-label="Mehr"><Dots w={28} r={3} /></PlainButton>
      </CommandBar>

      <Body>
        <Sidebar aria-label="Navigationsbereich">
          <SideItem href="#start"><HomeIcon /><SideLabel>Start</SideLabel></SideItem>
          <SideItem href="#galerie"><GalleryIcon /><SideLabel>Galerie</SideLabel></SideItem>
          <SideRule />
          {pinned.map(([name, icon]) => (
            <SideItem key={name} href="#ordner">
              {icon}
              <SideLabel>{name}</SideLabel>
              <PinSlot><PinIcon /></PinSlot>
            </SideItem>
          ))}
          {folders.map((name) => (
            <SideItem key={name} href="#ordner"><FolderIcon /><SideLabel>{name}</SideLabel></SideItem>
          ))}
          <SideRule />
          <SideItem href="#pc" $tree>
            <Twisty><TreeChevron open /></Twisty>
            <ComputerIcon />
            <SideLabel>Dieser PC</SideLabel>
          </SideItem>
          {drives.map((name, i) => (
            <SideItem key={i} href="#laufwerk" $nested $selected={i === 0}>
              <Twisty><TreeChevron /></Twisty>
              <DriveIcon system={i === 0} />
              <SideLabel>{name}</SideLabel>
            </SideItem>
          ))}
          <SideItem href="#netzwerk" $tree>
            <Twisty><TreeChevron /></Twisty>
            <NetworkIcon />
            <SideLabel>Netzwerk</SideLabel>
          </SideItem>
        </Sidebar>
        <PaneEdge />

        <FilePane ref={pane}>
          <FileTable>
            <colgroup>
              <NameCol />
              <DateCol />
              <TypeCol />
              <SizeCol />
              <EndCol />
            </colgroup>
            <thead>
              <tr>
                <HeadCell $line>
                  <NameHead>
                    Name
                    <SortMark>
                      <Chevron w={12} h={8} sw={1.3} color="#a8a8a8" d="M1 6.5 L6 1.5 L11 6.5" />
                    </SortMark>
                  </NameHead>
                </HeadCell>
                <HeadCell $line>Änderungsdat...</HeadCell>
                <HeadCell $line>Typ</HeadCell>
                <HeadCell>Größe</HeadCell>
                <HeadCell as="td" $line />
              </tr>
            </thead>
            <tbody>
              {files.map(([name, date, type, size, kind], i) => (
                <FileRow key={name} $selected={i === 0} $tall={kind === "lame"}>
                  <NameCell>
                    <FileName>
                      <FileIconBox><FileIcon kind={kind} /></FileIconBox>
                      {name}
                    </FileName>
                  </NameCell>
                  <Cell>{date}</Cell>
                  <Cell>{type}</Cell>
                  <Cell $right>{size}</Cell>
                  <td />
                </FileRow>
              ))}
            </tbody>
          </FileTable>
        </FilePane>
        <ScrollTrack>
          <TrackSpace $share={629} />
          <ScrollThumb $share={632} />
          <TrackSpace $share={479} />
        </ScrollTrack>
        <PaneEdge />
        <PreviewPane />
      </Body>
      <Footer />
    </Window>
  );
}
